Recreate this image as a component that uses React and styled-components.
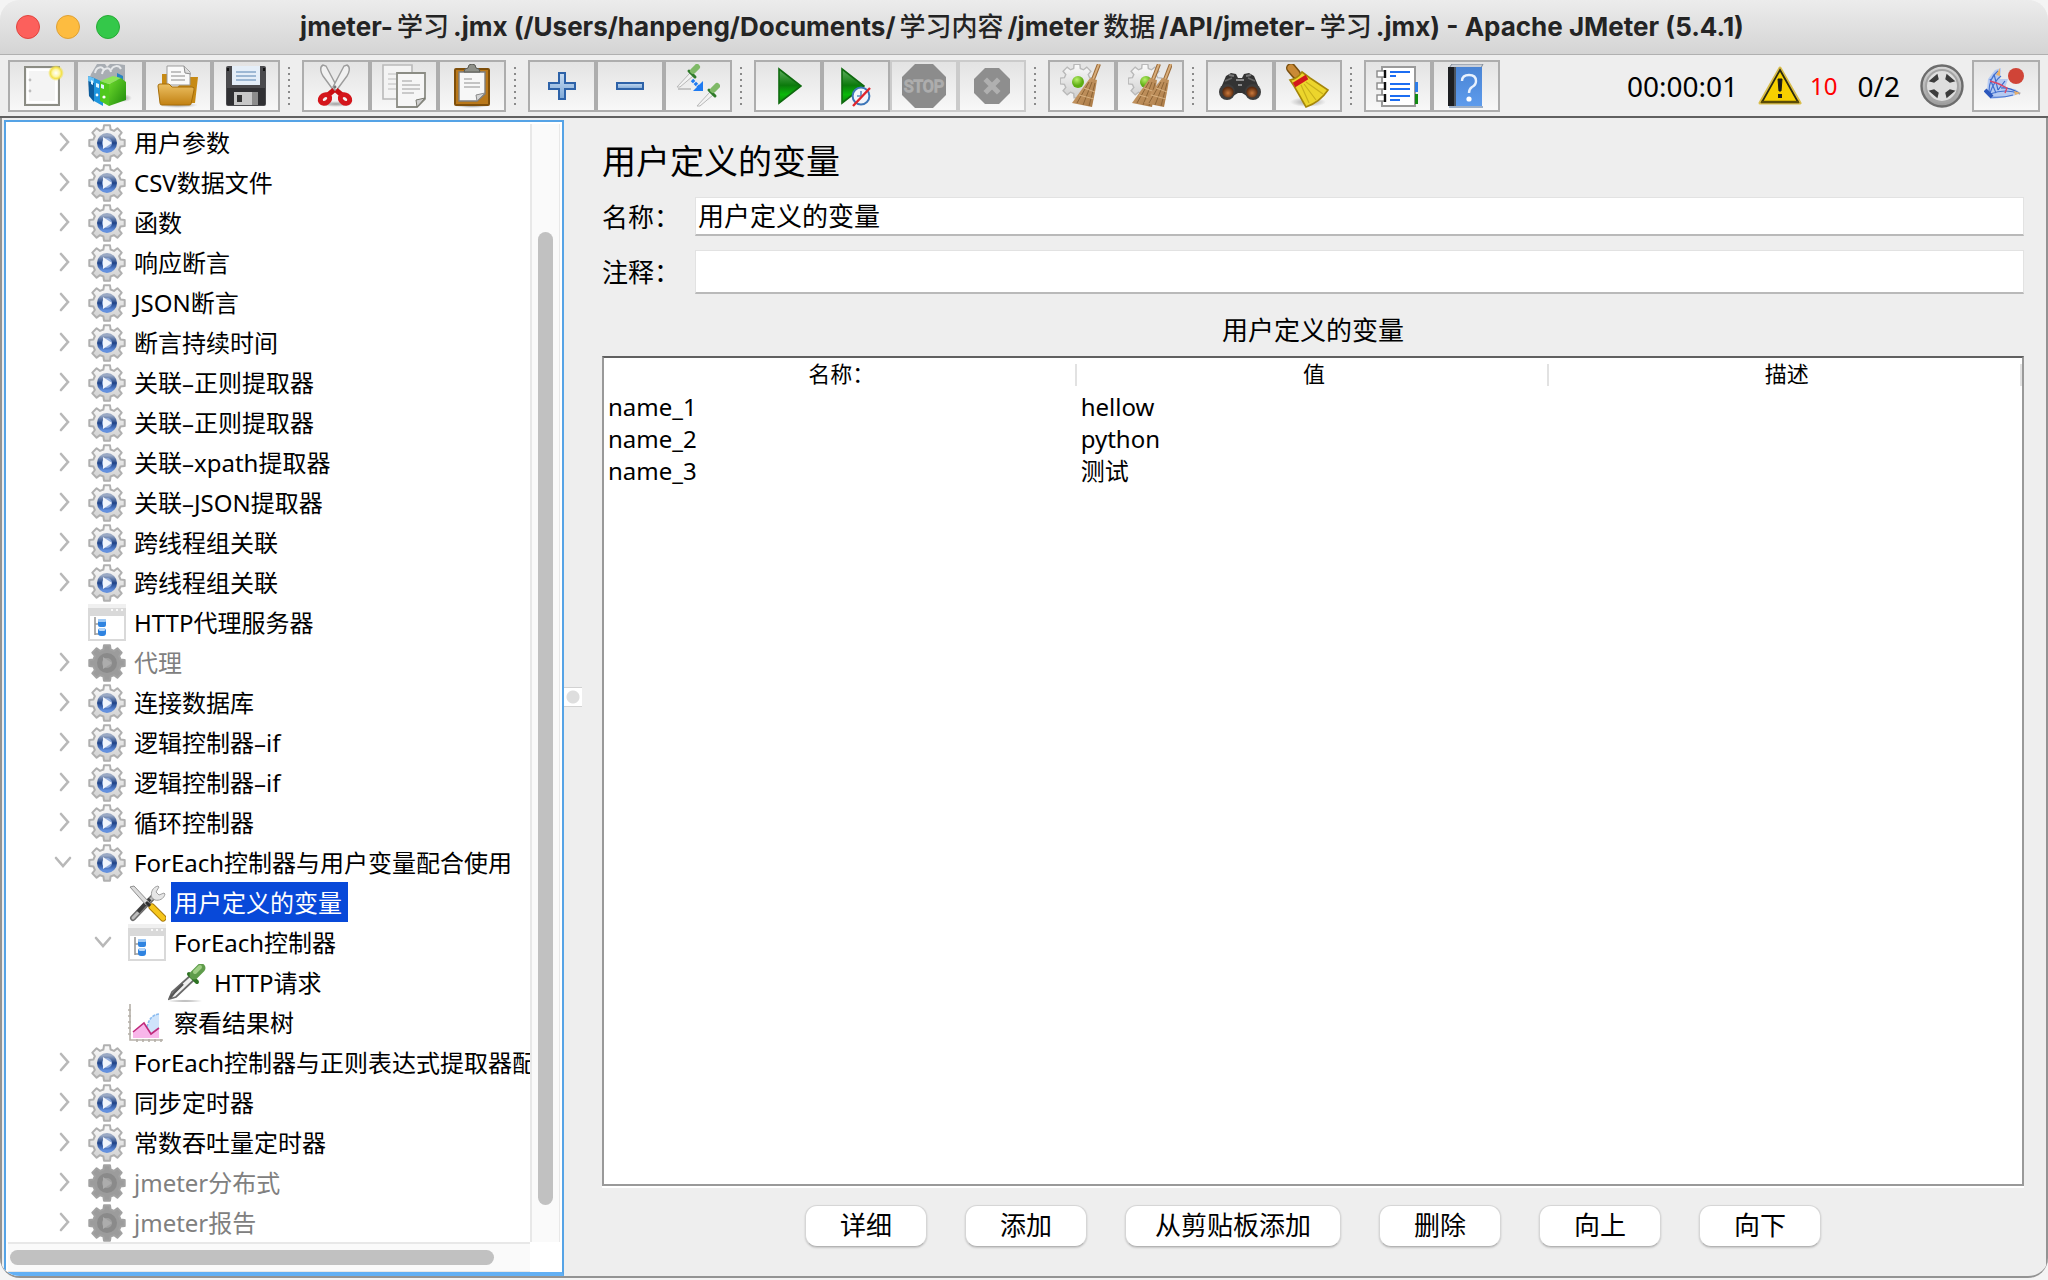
import React from 'react'
import styled, { createGlobalStyle, css } from 'styled-components'

const treeData = [
  { label: '用户参数' },
  { label: 'CSV数据文件' },
  { label: '函数' },
  { label: '响应断言' },
  { label: 'JSON断言' },
  { label: '断言持续时间' },
  { label: '关联–正则提取器' },
  { label: '关联–正则提取器' },
  { label: '关联–xpath提取器' },
  { label: '关联–JSON提取器' },
  { label: '跨线程组关联' },
  { label: '跨线程组关联' },
  { label: 'HTTP代理服务器', icon: 'controller', leaf: true },
  { label: '代理', disabled: true },
  { label: '连接数据库' },
  { label: '逻辑控制器–if' },
  { label: '逻辑控制器–if' },
  { label: '循环控制器' },
  { label: 'ForEach控制器与用户变量配合使用', open: true },
  { label: '用户定义的变量', depth: 1, icon: 'tools', leaf: true, selected: true },
  { label: 'ForEach控制器', depth: 1, icon: 'controller', open: true },
  { label: 'HTTP请求', depth: 2, icon: 'sampler', leaf: true },
  { label: '察看结果树', depth: 1, icon: 'chart', leaf: true },
  { label: 'ForEach控制器与正则表达式提取器配' },
  { label: '同步定时器' },
  { label: '常数吞吐量定时器' },
  { label: 'jmeter分布式', disabled: true },
  { label: 'jmeter报告', disabled: true },
]

const columns = ['名称：', '值', '描述']

const variables = [
  { name: 'name_1', value: 'hellow', desc: '' },
  { name: 'name_2', value: 'python', desc: '' },
  { name: 'name_3', value: '测试', desc: '' },
]

const actions = ['详细', '添加', '从剪贴板添加', '删除', '向上', '向下']

/* gradients shared by all the icons */
const Gradients = () => (
  <DefsSvg width='0' height='0' aria-hidden='true'>
    <defs>
      <linearGradient id='metal' x1='0' y1='0' x2='0' y2='1'>
        <stop offset='0' stopColor='#fafafa' />
        <stop offset='1' stopColor='#cfcfcf' />
      </linearGradient>
      <linearGradient id='ring' x1='0' y1='0' x2='0' y2='1'>
        <stop offset='0' stopColor='#9aa9c4' />
        <stop offset='0.5' stopColor='#1f4388' />
        <stop offset='1' stopColor='#6390de' />
      </linearGradient>
      <linearGradient id='gold' x1='0' y1='0' x2='0' y2='1'>
        <stop offset='0' stopColor='#ecc063' />
        <stop offset='1' stopColor='#c28112' />
      </linearGradient>
      <linearGradient id='play' x1='0' y1='0' x2='0' y2='1'>
        <stop offset='0' stopColor='#5fae5f' />
        <stop offset='0.48' stopColor='#0c7a0c' />
        <stop offset='0.75' stopColor='#0ab80a' />
        <stop offset='1' stopColor='#0a8c0a' />
      </linearGradient>
      <linearGradient id='blueBar' x1='0' y1='0' x2='0' y2='1'>
        <stop offset='0' stopColor='#c7dcf2' />
        <stop offset='1' stopColor='#7ea8d6' />
      </linearGradient>
      <linearGradient id='straw' x1='0' y1='0' x2='1' y2='1'>
        <stop offset='0' stopColor='#d2a572' />
        <stop offset='1' stopColor='#a87742' />
      </linearGradient>
      <linearGradient id='greenBox' x1='0' y1='0' x2='1' y2='1'>
        <stop offset='0' stopColor='#6edb2c' />
        <stop offset='1' stopColor='#1e8a0c' />
      </linearGradient>
      <linearGradient id='bookBlue' x1='0' y1='0' x2='0' y2='1'>
        <stop offset='0' stopColor='#4a84d4' />
        <stop offset='1' stopColor='#5d9bec' />
      </linearGradient>
      <radialGradient id='glow'>
        <stop offset='0' stopColor='#ffffff' />
        <stop offset='0.45' stopColor='#fdf6a8' />
        <stop offset='0.7' stopColor='#f3e14a' />
        <stop offset='1' stopColor='#f3e14a' stopOpacity='0' />
      </radialGradient>
      <radialGradient id='greenDot' cx='0.4' cy='0.3'>
        <stop offset='0' stopColor='#b8f06a' />
        <stop offset='1' stopColor='#5fae14' />
      </radialGradient>
      <radialGradient id='lens' cx='0.5' cy='0.6'>
        <stop offset='0' stopColor='#c9793c' />
        <stop offset='1' stopColor='#5c2c10' />
      </radialGradient>
      <radialGradient id='shade'>
        <stop offset='0' stopColor='#000' stopOpacity='0.35' />
        <stop offset='1' stopColor='#000' stopOpacity='0' />
      </radialGradient>
      <linearGradient id='disc' x1='0' y1='0' x2='0' y2='1'>
        <stop offset='0' stopColor='#d8d8d8' />
        <stop offset='1' stopColor='#9a9a9a' />
      </linearGradient>
    </defs>
  </DefsSvg>
)

const gearPath = (cx, cy, outer, inner) => {
  const points = []
  for (let i = 0; i < 8; i++) {
    const a = (i * Math.PI) / 4 - Math.PI / 2
    const spots = [
      [inner, -0.26],
      [outer, -0.17],
      [outer, 0.17],
      [inner, 0.26],
    ]
    spots.forEach(([r, d]) => {
      points.push(
        `${(cx + r * Math.cos(a + d)).toFixed(1)} ${(cy + r * Math.sin(a + d)).toFixed(1)}`
      )
    })
  }
  return `M${points.join('L')}Z`
}

const GearIcon = ({ disabled }) => (
  <TreeSvg viewBox='0 0 38 38'>
    <path
      d={gearPath(19, 19, 18, 14)}
      fill={disabled ? '#9c9c9c' : 'url(#metal)'}
      stroke={disabled ? '#a2a2a2' : '#b0b0b0'}
      strokeWidth='2'
      strokeLinejoin='round'
    />
    <circle
      cx='19'
      cy='19'
      r='7.5'
      fill={disabled ? '#a0a0a0' : '#8fabdc'}
      stroke={disabled ? '#8a8a8a' : 'url(#ring)'}
      strokeWidth='5'
    />
    <path d='M15 13l9 6-9 6z' fill={disabled ? '#adadad' : '#f1f5fc'} />
  </TreeSvg>
)

const ControllerIcon = () => (
  <TreeSvg viewBox='0 0 38 38'>
    <path d='M1 2h36v34H1z' fill='#fff' stroke='#d9d9d9' strokeWidth='2' />
    <path d='M0 1h38v11H0z' fill='#d9d9d9' />
    <path d='M0 0h38v4H0z' fill='#f0f0f0' />
    <path d='M23 6h2M28 6h2M33 6h2' stroke='#f8f8f8' strokeWidth='2' />
    <path d='M7 13v18M7 20h4M7 30h4' stroke='#9a9a9a' strokeWidth='1.6' fill='none' />
    <rect x='10' y='15' width='8' height='8' rx='2' fill='#2f83e0' />
    <rect x='10' y='15' width='8' height='3' rx='1' fill='#9cc8f5' />
    <rect x='10' y='24' width='8' height='8' rx='3' fill='#2f83e0' />
    <rect x='11' y='24' width='6' height='3' rx='1' fill='#b5d6f8' />
  </TreeSvg>
)

const ToolsIcon = () => (
  <TreeSvg viewBox='0 0 38 38'>
    <path d='M5 34L27 11' stroke='#6b6b6b' strokeWidth='6' strokeLinecap='round' />
    <path d='M5 34L27 11' stroke='#bdbdbd' strokeWidth='3' strokeLinecap='round' />
    <path d='M10 28L22 15' stroke='#3b3b3b' strokeWidth='4' />
    <path
      d='M24 14c-2-6 1-11 6-12l1 1-3 5 3 3 5-2 1 1c-1 5-6 7-10 6z'
      fill='#e6e6e6'
      stroke='#a0a0a0'
    />
    <path d='M2 3l4-1 15 16-3 3z' fill='#dcdcdc' stroke='#8f8f8f' />
    <path d='M24 23l11 11' stroke='#a97a08' strokeWidth='7' strokeLinecap='round' />
    <path d='M24 23l11 11' stroke='#f6c61c' strokeWidth='5' strokeLinecap='round' />
    <path d='M18 18l4 4' stroke='#2e2e2e' strokeWidth='3' />
  </TreeSvg>
)

const SamplerIcon = () => (
  <TreeSvg viewBox='0 0 38 38'>
    <ellipse cx='17' cy='37' rx='18' ry='1.6' fill='url(#shade)' />
    <path d='M1 35l3-7L23 11l4 4L8 33z' fill='#f1f1f1' stroke='#6a6a6a' strokeWidth='1.8' />
    <path d='M2 34l4-5 9-9' stroke='#555' strokeWidth='2.4' fill='none' />
    <path d='M21 10l8 8' stroke='#2f7424' strokeWidth='4' strokeLinecap='round' />
    <path d='M26 11l7-7' stroke='#5f9c4b' strokeWidth='9' strokeLinecap='round' />
    <path d='M27 8l5-5' stroke='#9fce85' strokeWidth='4' strokeLinecap='round' />
  </TreeSvg>
)

const ChartIcon = () => (
  <TreeSvg viewBox='0 0 38 38'>
    <path d='M19 32c0-14 4-22 12-22v22z' fill='#cfe4fb' />
    <path d='M19 23c2-8 5-12 12-13' fill='none' stroke='#8bbcf0' strokeWidth='1.6' strokeDasharray='3 1' />
    <path d='M5 34v-6l11-9 7 11 8-5v9z' fill='#f8b6ea' />
    <path d='M5 28l11-9 7 11 8-6' fill='none' stroke='#c02a7c' strokeWidth='1.6' />
    <path d='M2 0v36h33M0 6h3M0 12h3M0 18h3M0 24h3M0 30h3M9 38v-3M15 38v-3M21 38v-3M27 38v-3M33 38v-3' stroke='#b5b0a8' fill='none' strokeWidth='1.6' />
  </TreeSvg>
)

const treeIcons = {
  gear: GearIcon,
  controller: ControllerIcon,
  tools: ToolsIcon,
  sampler: SamplerIcon,
  chart: ChartIcon,
}

const Chevron = ({ open }) => (
  <svg width='34' height='40' viewBox='0 0 34 40' aria-hidden='true'>
    <path
      d={open ? 'M10 16l7 8 7-8' : 'M15 12l7 8-7 8'}
      fill='none'
      stroke='#b8b8b8'
      strokeWidth='2.6'
      strokeLinecap='round'
    />
  </svg>
)

const BroomHead = ({ x }) => (
  <g transform={`translate(${x} 0)`}>
    <path d='M39 0L32 18' stroke='#9a6a38' strokeWidth='4' />
    <path d='M39 0L32 18' stroke='#d8ae7c' strokeWidth='2' />
    <path d='M30 14l7 2-2 12-3 15-20-4 10-14z' fill='url(#straw)' />
    <path d='M29 18L17 39M32 18l-9 23M35 19l-6 23' stroke='#8d6436' strokeWidth='1' />
    <path d='M24 24l11 4M19 31l15 4' stroke='#d8b180' strokeWidth='1' />
  </g>
)

const GreenGear = () => (
  <>
    <path
      d={gearPath(17, 17, 17, 13)}
      fill='url(#metal)'
      stroke='#b9b9b9'
      strokeWidth='1.4'
    />
    <circle cx='18' cy='18' r='6' fill='url(#greenDot)' />
  </>
)

const Pipette = ({ x, y }) => (
  <g transform={`translate(${x} ${y})`}>
    <path d='M1 22L14 8l3 3L4 22z' fill='#f3f3f3' stroke='#b8b8b8' />
    <path d='M13 6l6 6' stroke='#2f7a2a' strokeWidth='3' strokeLinecap='round' />
    <path d='M17 6l4-4' stroke='#7fb967' strokeWidth='6' strokeLinecap='round' />
  </g>
)

const octagon = (a, b, c, d) =>
  `M${b} ${a}H${c}L${d} ${b}V${c}L${c} ${d}H${b}L${a} ${c}V${b}Z`

const toolIcons = {
  new: (
    <>
      <path d='M5 3h34v38H5z' fill='#f4f4f4' stroke='#8b8c84' strokeWidth='2' />
      <path d='M8 6h28v32H8z' fill='none' stroke='#fff' strokeWidth='2' />
      <circle cx='10' cy='16' r='1.4' fill='#bdbdbd' />
      <circle cx='10' cy='27' r='1.4' fill='#bdbdbd' />
      <circle cx='36' cy='9' r='8' fill='url(#glow)' />
    </>
  ),
  templates: (
    <>
      <ellipse cx='35' cy='34' rx='9' ry='4' fill='url(#shade)' />
      <path d='M3 10L9 0h8l2 3 3-3h8l7 1v16L17 20 2 13z' fill='#a8adb3' />
      <path d='M7 9c1-6 8-8 9-2M14 10c1-6 8-8 9-2M23 6c2-5 8-5 10-1' fill='none' stroke='#e6e8ea' strokeWidth='2' />
      <path d='M0 12l6 2v24l-5-6z' fill='#0c5d9e' />
      <path d='M6 14l9 4v24l-9-5z' fill='#1e95dd' />
      <path d='M0 12l6 2v5l-6-2z' fill='#69c2f5' />
      <path d='M29 9l6 3v8l-6-3z' fill='#2782c4' />
      <path d='M12 17l9 3v22l-9-5z' fill='#50c81e' />
      <path d='M21 20l12-6 5 4v18L21 42z' fill='url(#greenBox)' />
      <path d='M12 17l13-5 8 2-12 6z' fill='#8ee657' />
      <path d='M13 20l3 1v4l-3-1zM3 16l2 1v4l-2-1zM8 19l3 1v4l-3-1z' fill='#dff5ff' />
      <circle cx='16' cy='33' r='1.6' fill='#fff' />
      <circle cx='9' cy='31' r='1.4' fill='#fff' />
    </>
  ),
  open: (
    <>
      <ellipse cx='22' cy='41' rx='20' ry='3' fill='url(#shade)' />
      <path d='M6 10h8v10H6zM30 13h12l-3 26H8z' fill='#c78a14' />
      <path d='M11 21V2h17l6 6v13z' fill='#fafafa' stroke='#9b9b9b' />
      <path d='M28 2l1 7 6 1' fill='#ddd' stroke='#8d8d8d' />
      <path d='M15 8h10M15 12h14M15 16h14' stroke='#b0b0b0' strokeWidth='1.6' />
      <path d='M2 22q0-2 2-2h9l3 3h20q3 0 2 3l-3 14q0 1-2 1H6q-2 0-2-2z' fill='url(#gold)' stroke='#a66d08' />
    </>
  ),
  save: (
    <>
      <rect x='2' y='2' width='40' height='40' rx='2' fill='#4a4a4d' />
      <path d='M3 24h38v17H3z' fill='#303033' />
      <path d='M8 2h28v19H8z' fill='#e4eef8' />
      <path d='M12 8h20M12 12h20M12 16h20' stroke='#9db8d4' strokeWidth='1.8' />
      <path d='M10 28h24v13H10z' fill='#c8c8c8' />
      <path d='M13 31h5v7h-5z' fill='#333' />
      <path d='M28 28h6v13h-6z' fill='#8d8d8d' />
      <path d='M3 4h2v3H3zM39 4h2v3h-2z' fill='#111' />
    </>
  ),
  cut: (
    <>
      <ellipse cx='22' cy='40' rx='17' ry='3' fill='url(#shade)' />
      <path d='M9 1c-4 2-2 8 0 11l11 15 3-4L12 2z' fill='#f1f1f1' stroke='#9c9c9c' strokeWidth='1.4' />
      <path d='M33 1c4 2 2 8 0 11L22 27l-3-4L30 2z' fill='#f1f1f1' stroke='#9c9c9c' strokeWidth='1.4' />
      <circle cx='21' cy='23' r='1.4' fill='#777' />
      <path d='M22 26l6 5M20 26l-6 5' stroke='#c90f14' strokeWidth='5' />
      <ellipse cx='11' cy='35' rx='5' ry='4' fill='none' stroke='#d4161c' strokeWidth='5' transform='rotate(-35 11 35)' />
      <ellipse cx='31' cy='35' rx='5' ry='4' fill='none' stroke='#d4161c' strokeWidth='5' transform='rotate(35 31 35)' />
    </>
  ),
  copy: (
    <>
      <path d='M1 1h29v34H1z' fill='#f3f3f3' stroke='#b9b9b9' strokeWidth='1.6' />
      <path d='M6 10h8M6 15h8M6 20h8M6 25h8' stroke='#d0d0d0' strokeWidth='1.6' />
      <path d='M15 9h28v26l-8 8H15z' fill='#f6f6f6' stroke='#8b8c84' strokeWidth='1.8' />
      <path d='M20 17h10M20 21h18M20 25h18M20 29h12' stroke='#bcbcbc' strokeWidth='1.6' />
      <path d='M43 34l-8 9-1-7z' fill='#cfcfcf' stroke='#77786f' />
    </>
  ),
  paste: (
    <>
      <ellipse cx='22' cy='42' rx='17' ry='2' fill='url(#shade)' />
      <rect x='5' y='5' width='34' height='36' rx='1' fill='#b9781a' stroke='#7f4f0a' strokeWidth='2' />
      <path d='M9 8h26v22l-8 7H9z' fill='#f7f7f7' stroke='#7e7e7e' strokeWidth='1.4' />
      <path d='M14 15h8M14 19h16M14 23h16' stroke='#b2b2b2' strokeWidth='1.6' />
      <path d='M35 29l-8 8-1-6z' fill='#d5d5d5' stroke='#8a8a8a' />
      <path d='M14 8q0-4 4-4 0-4 4-4t4 4q4 0 4 4z' fill='#8f918a' stroke='#5b5c56' />
    </>
  ),
  plus: (
    <path d='M19 9h6v10h10v6H25v10h-6V25H9v-6h10z' fill='url(#blueBar)' stroke='#2d62a8' strokeWidth='2' />
  ),
  minus: <rect x='9' y='19' width='26' height='6' fill='url(#blueBar)' stroke='#2d62a8' strokeWidth='2' />,
  toggle: (
    <>
      <Pipette x={0} y={1} />
      <path d='M2 25h13' stroke='#bbb' strokeWidth='1.6' />
      <path d='M16 16l7 7' stroke='#1f7bf2' strokeWidth='3.4' strokeDasharray='3 1' />
      <path d='M27 17v10H17z' fill='#1f7bf2' />
      <Pipette x={20} y={20} />
    </>
  ),
  start: <path d='M13 5l22 17-22 17z' fill='url(#play)' stroke='#0f6a0f' strokeWidth='1.6' />,
  startNoPauses: (
    <>
      <path d='M8 5l22 17L8 39z' fill='url(#play)' stroke='#0f6a0f' strokeWidth='1.6' />
      <circle cx='27' cy='32' r='8.4' fill='#f1f5fa' stroke='#3d76b8' strokeWidth='2' />
      <path d='M27 27v5h-4' stroke='#5b89bd' fill='none' strokeWidth='1.6' />
      <path d='M19 42l17-18' stroke='#e0252b' strokeWidth='2.4' />
    </>
  ),
  stop: (
    <>
      <path d={octagon(0, 13, 31, 44)} fill='#8c8c8c' />
      <text
        x='22'
        y='28'
        textAnchor='middle'
        fontFamily='Roboto, "Liberation Sans", sans-serif'
        fontSize='16'
        fill='#8c8c8c'
        stroke='#adadad'
        strokeWidth='1.4'
      >
        STOP
      </text>
    </>
  ),
  shutdown: (
    <>
      <path d={octagon(4, 15, 29, 40)} fill='#8e8e8e' />
      <path d='M17 17l10 10M27 17L17 27' stroke='#b0b0b0' strokeWidth='5' strokeLinecap='square' />
    </>
  ),
  clear: (
    <>
      <GreenGear />
      <BroomHead x={0} />
    </>
  ),
  clearAll: (
    <>
      <GreenGear />
      <BroomHead x={-8} />
      <BroomHead x={4} />
    </>
  ),
  search: (
    <>
      <path d='M13 9l5 1 2 4h4l2-4 5-1 5 3 6 14-8 9-10-6h-4l-10 6-8-9 6-14z' fill='#333' />
      <path d='M11 11l5 1M28 12l5-1' stroke='#777' strokeWidth='2' />
      <path d='M18 16h8M20 21h4' stroke='#8a8a8a' strokeWidth='2' />
      <circle cx='9' cy='28' r='8' fill='#3d3d3d' />
      <circle cx='35' cy='28' r='8' fill='#3d3d3d' />
      <circle cx='10' cy='28' r='5.6' fill='url(#lens)' />
      <circle cx='34' cy='28' r='5.6' fill='url(#lens)' />
      <path d='M7 17l7-3M37 17l-7-3' stroke='#666' strokeWidth='1.6' />
    </>
  ),
  searchReset: (
    <>
      <ellipse cx='22' cy='38' rx='18' ry='5' fill='url(#shade)' />
      <path d='M5 4l5 6' stroke='#7a5010' strokeWidth='10' strokeLinecap='round' />
      <path d='M5 4l5 6' stroke='#c98a36' strokeWidth='7' strokeLinecap='round' />
      <path d='M4 16q7-1 12-8l8 6 18 12q-8 12-22 17L8 22z' fill='#ecd52c' stroke='#a5860a' strokeWidth='1.6' />
      <path d='M15 21l8 18M18 20l12 16M20 18l17 12' stroke='#c9b01c' strokeWidth='1.2' />
      <path d='M8 21l13-8' stroke='#d3181c' strokeWidth='5' />
    </>
  ),
  functions: (
    <>
      <path d='M6 3h33v39H6z' fill='#fff' stroke='#9a9a9a' strokeWidth='2' />
      <path d='M39 18h3v10h-3z' fill='#2e7de8' />
      <path d='M39 30h3v10h-3z' fill='#118a11' />
      <path d='M14 8h20M14 12h6M14 20h20M14 25h20M14 32h20M14 36h10' stroke='#1c6df2' strokeWidth='2' />
      {[10, 22, 34].map((y) => (
        <g key={y}>
          <rect x='1' y={y - 3} width='8' height='6' fill='#fff' stroke='#8a8a8a' strokeWidth='1.4' />
          <path d={`M9 ${y - 4}v8`} stroke='#111' strokeWidth='2.4' />
        </g>
      ))}
    </>
  ),
  help: (
    <>
      <path d='M8 0h31l-2 4H5z' fill='#c9cfd8' stroke='#7f8894' />
      <path d='M4 3h34v39H4z' fill='url(#bookBlue)' />
      <path d='M4 3h7v39H4z' fill='#1d1f22' />
      <path d='M10 3h2v39h-2z' fill='#4c5560' />
      <path d='M5 42h34v2H5z' fill='#9fb0c6' />
      <path d='M18 17q0-6 7-6t7 6q0 4-4 6-3 2-3 6' fill='none' stroke='#e8f1fd' strokeWidth='2.4' />
      <circle cx='25' cy='35' r='2.6' fill='#fff' />
    </>
  ),
  feather: (
    <>
      <path d='M3 26l1-11 7-9 6-2-1 11 8 0-3 9 10 1 6 4-8 3-13 2-9 1z' fill='#b5caf2' />
      <path d='M5 28q0-14 9-21M6 29q4-12 11-17M6 30q16-6 30 0M7 33q12 1 22-2M6 15l6 14M10 10l4 16' stroke='#4270cf' strokeWidth='1.2' fill='none' />
      <path d='M21 17l-7 9M17 24q8-1 18 5' stroke='#3462c6' strokeWidth='1.2' fill='none' />
      <path d='M6 17q9 2 17 7l-2 5' stroke='#d8486a' strokeWidth='1.4' fill='none' />
      <path d='M12 11l4-7v8zM30 27l7 2-6 2z' fill='#e8b06a' />
      <path d='M1 26l7 7' stroke='#2c58bd' strokeWidth='4' />
      <circle cx='32' cy='12' r='8' fill='#d04437' />
    </>
  ),
}

const toolGroups = [
  [
    { icon: 'new', title: '新建' },
    { icon: 'templates', title: '模板' },
    { icon: 'open', title: '打开' },
    { icon: 'save', title: '保存' },
  ],
  [
    { icon: 'cut', title: '剪切' },
    { icon: 'copy', title: '复制' },
    { icon: 'paste', title: '粘贴' },
  ],
  [
    { icon: 'plus', title: '全部展开' },
    { icon: 'minus', title: '全部折叠' },
    { icon: 'toggle', title: '切换' },
  ],
  [
    { icon: 'start', title: '启动' },
    { icon: 'startNoPauses', title: '不停顿开始' },
    { icon: 'stop', title: '停止', disabled: true },
    { icon: 'shutdown', title: '关闭', disabled: true },
  ],
  [
    { icon: 'clear', title: '清除' },
    { icon: 'clearAll', title: '清除全部' },
  ],
  [
    { icon: 'search', title: '查找' },
    { icon: 'searchReset', title: '重置查找' },
  ],
  [
    { icon: 'functions', title: '函数助手' },
    { icon: 'help', title: '帮助' },
  ],
]

const ToolIcon = ({ name }) => (
  <svg width='44' height='44' viewBox='0 0 44 44' aria-hidden='true'>
    {toolIcons[name]}
  </svg>
)

const Toolbar = () => (
  <Bar>
    {toolGroups.map((group, index) => (
      <React.Fragment key={index}>
        {index > 0 && <Separator />}
        {group.map(({ icon, title, disabled }) => (
          <ToolButton key={icon} aria-label={title} disabled={disabled}>
            <ToolIcon name={icon} />
          </ToolButton>
        ))}
      </React.Fragment>
    ))}
    <Status>
      <Clock>00:00:01</Clock>
      <Warning>
        <svg width='44' height='44' viewBox='0 0 44 44' aria-hidden='true'>
          <path d='M22 4L42 39H2z' fill='#f7d000' stroke='#d9bd4a' strokeWidth='3' strokeLinejoin='round' />
          <path d='M22 6L40 38H4z' fill='#f7d000' stroke='#2b2a12' strokeWidth='1.8' />
          <path d='M3 38h38' stroke='#5c4c06' strokeWidth='2.4' />
          <path d='M20 15h4l-1 12h-2z' fill='#1b1b1b' stroke='#1b1b1b' />
          <path d='M20 30h4v4h-4z' fill='#1b1b1b' />
        </svg>
        <ErrorCount>10</ErrorCount>
      </Warning>
      <Clock>0/2</Clock>
      <svg width='44' height='44' viewBox='0 0 44 44' aria-hidden='true'>
        <circle cx='22' cy='22' r='20.5' fill='url(#disc)' stroke='#6c6c6c' strokeWidth='2.4' />
        <circle cx='22' cy='22' r='16' fill='#dedede' stroke='#a5a5a5' strokeWidth='2' />
        <path
          d='M10 17l7-6 1 4-4 3zM34 17l-7-6-1 4 4 3zM10 27l7 6 1-4-4-3zM34 27l-7 6-1-4 4-3z'
          fill='#3c3c3c'
          stroke='#3c3c3c'
          strokeWidth='1.4'
        />
      </svg>
    </Status>
    <ToolButton aria-label='Apache JMeter'>
      <ToolIcon name='feather' />
    </ToolButton>
  </Bar>
)

const TestTree = () => (
  <Sidebar>
    <Viewport>
      <Tree role='tree'>
        {treeData.map((node, index) => {
          const { label, icon = 'gear', depth = 0, leaf, open, disabled, selected } = node
          const Icon = treeIcons[icon]
          return (
            <TreeRow key={index} role='treeitem' aria-selected={!!selected} $depth={depth}>
              <Toggle aria-label={label} $hidden={leaf}>
                <Chevron open={open} />
              </Toggle>
              <Icon disabled={disabled} />
              <NodeLabel $disabled={disabled} $selected={selected}>
                {label}
              </NodeLabel>
            </TreeRow>
          )
        })}
      </Tree>
    </Viewport>
    <VerticalTrack>
      <Thumb />
    </VerticalTrack>
    <HorizontalTrack>
      <Thumb />
    </HorizontalTrack>
  </Sidebar>
)

const VariablesPanel = () => (
  <Panel>
    <PanelTitle>用户定义的变量</PanelTitle>
    <Field>
      <FieldLabel htmlFor='name'>名称：</FieldLabel>
      <TextInput id='name' defaultValue='用户定义的变量' />
    </Field>
    <Field>
      <FieldLabel htmlFor='comments'>注释：</FieldLabel>
      <TextInput id='comments' $tall />
    </Field>
    <TableTitle>用户定义的变量</TableTitle>
    <TableFrame>
      <Table>
        <thead>
          <tr>
            {columns.map((column) => (
              <HeadCell key={column}>
                <HeadLabel>{column}</HeadLabel>
              </HeadCell>
            ))}
          </tr>
        </thead>
        <tbody>
          {variables.map(({ name, value, desc }) => (
            <tr key={name}>
              <Cell>{name}</Cell>
              <Cell>{value}</Cell>
              <Cell>{desc}</Cell>
            </tr>
          ))}
        </tbody>
      </Table>
    </TableFrame>
    <Actions>
      {actions.map((action) => (
        <ActionButton key={action}>{action}</ActionButton>
      ))}
    </Actions>
  </Panel>
)

const App = () => {
  return (
    <>
      <GlobalStyle />
      <Gradients />
      <Window>
        <TitleBar>
          <Light $color='#fc605c' $edge='#e0443e' />
          <Light $color='#fdbc40' $edge='#dea034' />
          <Light $color='#34c84a' $edge='#27aa35' />
          <Title>
            jmeter-<Han>学习</Han>.jmx (/Users/hanpeng/Documents/<Han>学习内容</Han>/jmeter
            <Han>数据</Han>/API/jmeter-<Han>学习</Han>.jmx) - Apache JMeter (5.4.1)
          </Title>
        </TitleBar>
        <Toolbar />
        <Main>
          <TestTree />
          <Splitter>
            <Grip />
          </Splitter>
          <VariablesPanel />
        </Main>
      </Window>
    </>
  )
}

const GlobalStyle = createGlobalStyle`
  * {
    box-sizing: border-box;
  }
  body {
    margin: 0;
    background: #f4f4f4;
    color: #000;
    font-family: 'Noto Sans', 'Noto Sans CJK SC', sans-serif;
    font-size: 24px;
  }
  button,
  input {
    font: inherit;
    color: inherit;
  }
  svg {
    display: block;
    flex: none;
  }
`

const DefsSvg = styled.svg`
  position: absolute;
`

const TreeSvg = styled.svg.attrs({ 'aria-hidden': true })`
  width: 38px;
  height: 38px;
  margin-top: 2px;
`

const Window = styled.div`
  display: flex;
  flex-direction: column;
  min-height: calc(100vh - 2px);
  border-bottom: 2px solid #939393;
  border-radius: 20px;
  background: #eee;
  overflow: hidden;
`

const TitleBar = styled.header`
  display: flex;
  align-items: center;
  gap: 16px;
  height: 55px;
  padding: 0 16px;
  border-bottom: 1px solid #b0b0b0;
  background: linear-gradient(#ececec, #d4d4d4);
`

const Light = styled.span`
  width: 24px;
  height: 24px;
  border: 1px solid ${({ $edge }) => $edge};
  border-radius: 50%;
  background: ${({ $color }) => $color};
`

const Title = styled.h1`
  flex: 1;
  margin: 0 124px 0 0;
  color: #242424;
  font-family: Inter, 'Noto Sans CJK SC', sans-serif;
  font-size: 26px;
  font-weight: 700;
  line-height: 54px;
  text-align: center;
  white-space: nowrap;
`

const Han = styled.span`
  padding: 0 4px;
  font-weight: 500;
`

const Bar = styled.div`
  display: flex;
  align-items: center;
  height: 63px;
  padding: 0 8px;
  border-bottom: 2px solid #606060;
`

const ToolButton = styled.button`
  display: flex;
  align-items: center;
  justify-content: center;
  width: 68px;
  height: 52px;
  padding: 0;
  border: 2px solid ${({ disabled }) => (disabled ? '#cbcbcb' : '#adadad')};
  background: linear-gradient(#e3e3e3, #f8f8f8);
`

const Separator = styled.div`
  width: 2px;
  height: 38px;
  margin: 0 12px 0 8px;
  background: repeating-linear-gradient(#8a8a8a 0 2px, transparent 2px 6px);
`

const Status = styled.div`
  display: flex;
  align-items: center;
  gap: 20px;
  margin: 0 8px 0 auto;
`

const Clock = styled.span`
  font-size: 28px;
  line-height: 40px;
`

const Warning = styled.div`
  display: flex;
  align-items: center;
  gap: 8px;
`

const ErrorCount = styled.span`
  color: #f00;
  line-height: 40px;
`

const Main = styled.main`
  display: flex;
  flex: 1;
  border: solid #939393;
  border-width: 0 2px;
`

const Sidebar = styled.aside`
  display: grid;
  grid-template-columns: 1fr 32px;
  grid-template-rows: 1fr 30px;
  flex: none;
  width: 560px;
  margin: 2px 0 0 2px;
  border: 2px solid #55a3e6;
  border-bottom: 4px solid #62b0f5;
  background: #fff;
`

const Viewport = styled.div`
  min-width: 0;
  overflow: hidden;
`

const Tree = styled.ul`
  margin: 0;
  padding: 0;
  list-style: none;
`

const TreeRow = styled.li`
  display: flex;
  align-items: center;
  height: 40px;
  padding-left: ${({ $depth }) => 40 + $depth * 40}px;
`

const Toggle = styled.button`
  margin-right: 8px;
  padding: 0;
  border: 0;
  background: none;
  visibility: ${({ $hidden }) => ($hidden ? 'hidden' : 'visible')};
`

const NodeLabel = styled.span`
  height: 40px;
  margin-left: 5px;
  padding: 0 6px 0 3px;
  line-height: 42px;
  white-space: nowrap;
  ${({ $disabled }) =>
    $disabled &&
    css`
      color: #808080;
    `}
  ${({ $selected }) =>
    $selected &&
    css`
      background: #0849d9;
      color: #fff;
    `}
`

const VerticalTrack = styled.div`
  display: grid;
  grid-template-rows: 108fr 973fr 37fr;
  width: 30px;
  margin-top: 2px;
  padding: 0 6px;
  border: solid #e8e8e8;
  border-width: 0 1px 0 2px;
  background: #fafafa;
`

const HorizontalTrack = styled.div`
  display: grid;
  grid-template-columns: 2fr 484fr 36fr;
  margin-left: 2px;
  padding: 6px 0;
  border: solid #e8e8e8;
  border-width: 2px 0 1px;
  background: #fafafa;
`

const Thumb = styled.div`
  border-radius: 8px;
  background: #c1c1c1;

  ${VerticalTrack} & {
    grid-row: 2;
  }
  ${HorizontalTrack} & {
    grid-column: 2;
  }
`

const Splitter = styled.div`
  display: flex;
  align-items: center;
  width: 18px;
`

const Grip = styled.div`
  width: 18px;
  height: 20px;
  border: solid #d2d2d2;
  border-width: 1px 0;
  background: radial-gradient(circle at 9px 9px, #dedede 6px, #fff 7px);
`

const Panel = styled.section`
  display: flex;
  flex: 1;
  flex-direction: column;
  min-width: 0;
  padding: 20px 22px 29px 20px;
`

const PanelTitle = styled.h2`
  margin: 0 0 13px;
  font-size: 34px;
  font-weight: 400;
  line-height: 46px;
`

const Field = styled.div`
  display: flex;
  align-items: center;
  margin-bottom: 14px;
  font-size: 26px;
`

const FieldLabel = styled.label`
  width: 93px;
  line-height: 38px;
`

const TextInput = styled.input`
  flex: 1;
  min-width: 0;
  height: ${({ $tall }) => ($tall ? 44 : 39)}px;
  padding: 0 2px 2px;
  border: 1px solid #e2e2e2;
  border-bottom: 2px solid #b9b9b9;
  background: #fff;
  outline: none;
`

const TableTitle = styled.h3`
  margin: 3px 0 7px;
  font-size: 26px;
  font-weight: 400;
  line-height: 38px;
  text-align: center;
`

const TableFrame = styled.div`
  flex: 1;
  border: 2px solid #999;
  border-top-color: #606060;
  background: #fff;
  box-shadow: 0 2px #fff;
`

const Table = styled.table`
  width: 100%;
  border-collapse: collapse;
  table-layout: fixed;
`

const HeadCell = styled.th`
  height: 34px;
  padding: 0;
  font-size: 22px;
  font-weight: 400;
`

const HeadLabel = styled.div`
  height: 22px;
  padding-left: 4px;
  border-right: 2px solid #e2e2e2;
  line-height: 18px;
`

const Cell = styled.td`
  height: 32px;
  padding: 0 4px;
  line-height: 30px;
  vertical-align: top;
`

const Actions = styled.div`
  display: flex;
  justify-content: center;
  gap: 38px;
  margin-top: 19px;
`

const ActionButton = styled.button`
  min-width: 122px;
  height: 42px;
  padding: 0 29px 2px;
  border: 1px solid #d6d6d6;
  border-bottom-color: #b4b4b4;
  border-radius: 12px;
  background: #fff;
  box-shadow: 0 1px 2px rgba(0, 0, 0, 0.18);
  font-size: 26px;
  line-height: 38px;
`

export default App
